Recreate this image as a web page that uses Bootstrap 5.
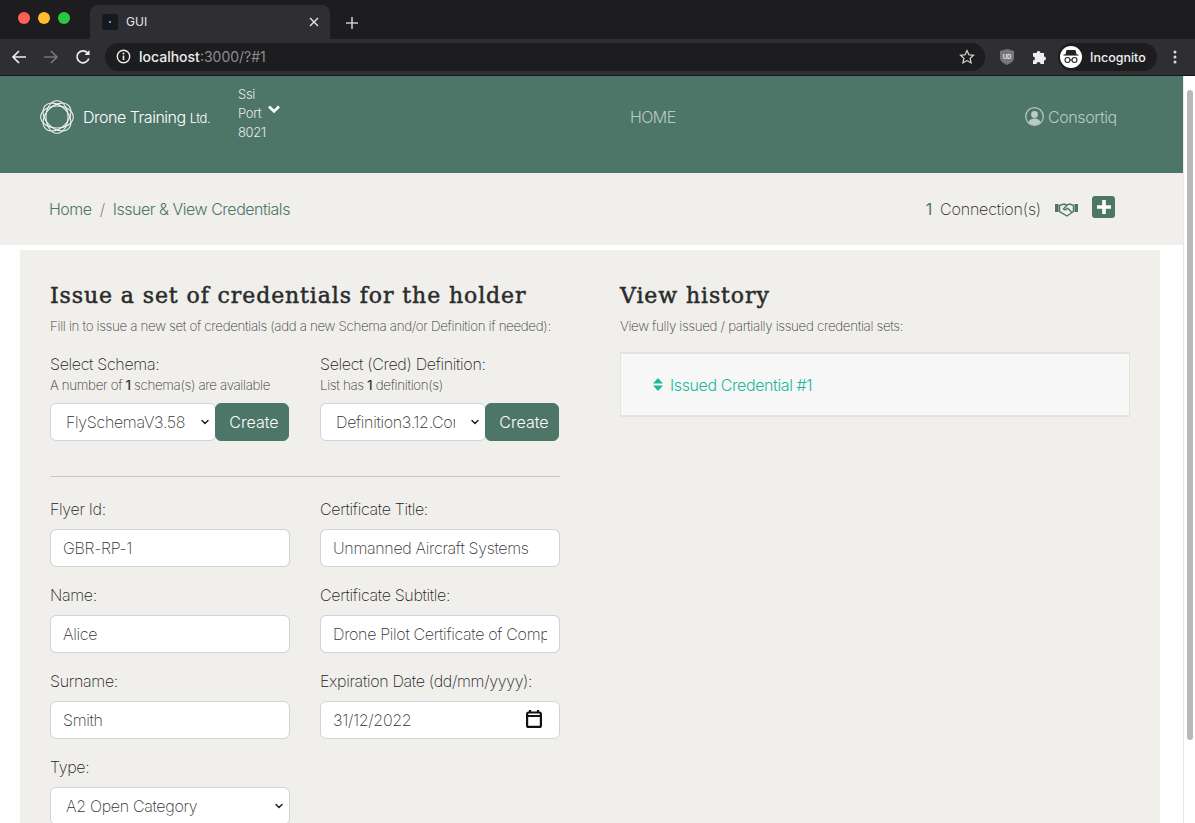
<!DOCTYPE html>
<html lang="en">
<head>
    <meta charset="UTF-8">
    <meta name="viewport" content="width=device-width, initial-scale=1.0">
    <title>GUI</title>
    <link href="https://cdn.jsdelivr.net/npm/bootstrap@5.3.0/dist/css/bootstrap.min.css" rel="stylesheet">
    <style>
        html, body { height: 100%; overflow: hidden; }
        body { font-family: Inter, "Liberation Sans", sans-serif; font-weight: 300; color: #212529; background: #fff; }

        /* browser frame */
        .tab-strip { height: 39px; background: #1d1d20; padding-left: 90px; }
        .lights { left: 18px; top: 12px; }
        .light { width: 12px; height: 12px; border-radius: 50%; }
        .browser-tab { width: 240px; height: 34px; margin-top: 5px; background: #2e2e33; border-radius: 8px 8px 0 0; padding: 0 11px 0 12px; color: #e8e8e8; font-size: 12px; font-weight: 400; }
        .tab-icon { width: 16px; height: 16px; background: #17191c; border-radius: 2px; }
        .tab-icon span { width: 2px; height: 2px; background: #39b6e8; }
        .toolbar { height: 37px; background: #2e2e33; border-bottom: 1px solid #18181a; padding: 0 13px 1px 11px; }
        .address { width: 880px; height: 28px; background: #1d1d20; border-radius: 14px; margin-left: 14px; padding: 0 10px 0 11px; color: #8c8c8f; font-size: 14px; font-weight: 400; }
        .address b { color: #eee; font-weight: 500; }
        .incognito { height: 28px; width: 99px; border-radius: 14px; background: #1d1d20; color: #eee; font-size: 12.5px; font-weight: 500; padding-left: 2px; margin-left: 10px; }
        .incognito span { padding-top: 3px; }
        .incog-face { width: 22px; height: 22px; background: #fff; border-radius: 50%; }

        /* page */
        .viewport { height: 747px; }
        .page-area { width: 1183px; letter-spacing: -.02em; font-weight: 200; }
        .scroll-track { width: 12px; background: #fff; border-left: 1px solid #e8e8e8; padding: 14px 2px 0 3px; }
        .scroll-thumb { height: 650px; background: #b9b9b9; border-radius: 4px; }

        .top-header { height: 97px; background: #4d7568; padding: 0 66px 16px 40px; color: #fff; }
        .brand-name { font-size: 16px; margin-left: 9px; width: 145px; font-weight: 300; letter-spacing: -.03em; }
        .brand-name small { font-size: 13px; }
        .port-info { font-size: 13px; line-height: 19px; margin: 0 0 6px 10px; color: #e4ebe8; width: 392px; font-weight: 300; letter-spacing: -.025em; }
        .home-link { font-size: 16px; color: #b9cbc5; text-decoration: none; width: 395px; font-weight: 300; letter-spacing: -.035em; }
        .user-link { font-size: 16px; color: #b9cbc5; font-weight: 300; letter-spacing: -.025em; }

        .crumb-band { height: 72px; background: #f0efeb; padding: 0 68px 0 49px; }
        .crumb-band .breadcrumb { --bs-breadcrumb-margin-bottom: 0; }
        .crumb-band a { color: #4d7568; text-decoration: none; font-weight: 300; letter-spacing: -.03em; }
        .conn-count { color: #4d7568; font-weight: 400; }
        .conn-text { letter-spacing: -.01em; }
        .plus-box { width: 23px; height: 22px; background: #4d7568; border-radius: 3px; margin-left: 14px; }
        .shake-icon { margin-left: 14px; }

        .work-card { width: 1140px; margin: 5px 0 0 20px; background: #f0efeb; }
        .work-col { padding: 31px 30px 0; }
        .slab-title { font-family: "DejaVu Serif", serif; font-size: 22px; font-weight: 400; line-height: 30px; color: #2b2b2b; margin-bottom: 6px; white-space: nowrap; letter-spacing: .9px; -webkit-text-stroke: .5px #2b2b2b; }
        .hint { font-size: 13.35px; line-height: 18px; color: #3a3a3a; letter-spacing: -.025em; margin-bottom: 17px; }
        .form-cols { --bs-gutter-x: 30px; }
        .field-label { color: #222; margin-bottom: 0; }
        .field-hint { font-size: 13.35px; line-height: 19px; color: #333; letter-spacing: -.025em; margin-bottom: 8px; }
        .field-hint b { font-weight: 500; }
        .work-card .form-label { color: #222; }
        .work-card .form-control, .work-card .form-select { font-weight: 200; color: #333; border-color: #ced4da; letter-spacing: -.02em; }
        .work-card .form-select { padding-left: 15px; background-size: 10px 8px; background-position: right 5px center; background-image: url("data:image/svg+xml,%3csvg xmlns='http://www.w3.org/2000/svg' viewBox='0 0 16 16'%3e%3cpath fill='none' stroke='%23222' stroke-linecap='round' stroke-linejoin='round' stroke-width='3' d='M2 5l6 6 6-6'/%3e%3c/svg%3e"); }
        .select-pair .form-select { width: 166px; flex: none; padding-right: 30px; }
        .btn-create { width: 74px; height: 38px; padding: 0 0 0 4px; background: #4d7568; border-color: #4d7568; color: #fff; font-weight: 300; margin-left: -1px; letter-spacing: 0; }
        .rule-line { margin: 35px 0 20px; border-color: #c9c9c5; opacity: 1; }
        .date-wrap svg { right: 18px; top: 9px; }
        .history-box { height: 65px; width: 510px; margin-top: 17px; background: #f7f7f7; border: solid #e2e2e0; border-width: 2px 1px; padding: 0 0 0 32px; }
        .history-box a { color: #1eb89a; text-decoration: none; font-weight: 300; gap: 7px; letter-spacing: -.025em; }
    </style>
</head>
<body>
<!-- Browser frame -->
<div class="tab-strip d-flex position-relative">
    <div class="lights position-absolute d-flex gap-2">
        <div class="light" style="background:#ff5f57"></div>
        <div class="light" style="background:#febc2e"></div>
        <div class="light" style="background:#28c840"></div>
    </div>
    <div class="browser-tab d-flex align-items-center">
        <div class="tab-icon d-flex align-items-center justify-content-center me-2"><span></span></div>
        <span class="flex-grow-1">GUI</span>
        <svg width="10" height="10" viewBox="0 0 10 10" stroke="#e8e8e8" stroke-width="1.4"><path d="M1 1l8 8M9 1l-8 8"/></svg>
    </div>
    <svg class="mt-3" style="margin-left:15px" width="14" height="14" viewBox="0 0 14 14" stroke="#c8c8c8" stroke-width="1.6"><path d="M7 1v12M1 7h12"/></svg>
</div>
<div class="toolbar d-flex align-items-center">
    <svg width="16" height="16" viewBox="0 0 16 16" fill="none" stroke="#eee" stroke-width="1.7"><path d="M15 8H2M8 2L2 8l6 6"/></svg>
    <svg class="ms-3" width="16" height="16" viewBox="0 0 16 16" fill="none" stroke="#77777a" stroke-width="1.7"><path d="M1 8h13M8 2l6 6-6 6"/></svg>
    <svg class="ms-3" width="16" height="16" viewBox="0 0 16 16" fill="none" stroke="#eee" stroke-width="1.7"><path d="M13.8 9.5A6 6 0 1 1 12.3 3.6L14 5.5"/><path d="M14.5 1v5h-5" fill="#eee" stroke="none"/></svg>
    <div class="address d-flex align-items-center">
        <svg width="15" height="15" viewBox="0 0 15 15" fill="none" class="me-2"><circle cx="7.5" cy="7.5" r="6.2" stroke="#eee" stroke-width="1.4"/><path d="M7.5 6.5v4.5" stroke="#eee" stroke-width="1.6"/><circle cx="7.5" cy="4.4" r="1" fill="#eee"/></svg>
        <span class="flex-grow-1"><b>localhost</b>:3000/?#1</span>
        <svg width="16" height="16" viewBox="0 0 16 16" fill="none" stroke="#ddd" stroke-width="1.2"><path d="M8 1.6l1.9 4.2 4.6.5-3.4 3.1 1 4.5L8 11.6l-4.1 2.3 1-4.5L1.5 6.3l4.6-.5z"/></svg>
    </div>
    <svg style="margin-left:15px" width="14" height="16" viewBox="0 0 14 16"><path d="M7 0l7 2v6.5c0 3.5-3 5.8-7 7.5-4-1.7-7-4-7-7.5V2z" fill="#77777b"/><text x="7" y="9.5" font-size="6" font-family="Inter" font-weight="600" fill="#eee" text-anchor="middle">UD</text></svg>
    <svg style="margin-left:18px" width="16" height="16" viewBox="0 0 16 16" fill="#eee"><path d="M1 4h3.5a2 2 0 1 1 4 0H12v3.500a2 2 0 1 1 0 4V15H8.500a2 2 0 1 0-4 0H1v-3.500a2 2 0 1 0 0-4z"/></svg>
    <div class="incognito d-flex align-items-center gap-2">
        <div class="incog-face d-flex align-items-center justify-content-center">
            <svg width="16" height="14" viewBox="0 0 16 14" fill="none" stroke="#222" stroke-width="1.1"><path d="M4 .5h8l1 4H3z" fill="#222"/><path d="M.5 5h15"/><circle cx="4.5" cy="10" r="2.5"/><circle cx="11.5" cy="10" r="2.5"/><path d="M7 10h2"/></svg>
        </div>
        <span>Incognito</span>
    </div>
    <svg class="ms-3" width="4" height="14" viewBox="0 0 4 14" fill="#ddd"><circle cx="2" cy="2" r="1.5"/><circle cx="2" cy="7" r="1.5"/><circle cx="2" cy="12" r="1.5"/></svg>
</div>

<div class="viewport d-flex overflow-hidden">
    <div class="page-area">
        <!-- Header -->
        <nav class="top-header d-flex align-items-center">
            <svg width="34" height="34" viewBox="0 0 34 34" fill="none" stroke="#eef2f0" stroke-width="1.1">
                <ellipse cx="17" cy="17" rx="16.3" ry="11"/>
                <ellipse cx="17" cy="17" rx="16.3" ry="11" transform="rotate(45 17 17)"/>
                <ellipse cx="17" cy="17" rx="16.3" ry="11" transform="rotate(90 17 17)"/>
                <ellipse cx="17" cy="17" rx="16.3" ry="11" transform="rotate(135 17 17)"/>
            </svg>
            <span class="brand-name">Drone Training <small>Ltd.</small></span>
            <div class="port-info d-flex align-items-center">
                <div>Ssi<br>Port<br>8021</div>
                <svg class="mb-2" style="margin-left:2px" width="12" height="9" viewBox="0 0 12 9" fill="none" stroke="#fff" stroke-width="2.6"><path d="M1 1.5l5 5 5-5"/></svg>
            </div>
            <a class="home-link" href="#">HOME</a>
            <span class="user-link d-flex align-items-center gap-1">
                <svg width="19" height="19" viewBox="0 0 19 19" fill="none"><circle cx="9.5" cy="9.5" r="8.8" stroke="#b9cbc5" stroke-width="1.2"/><circle cx="9.5" cy="7.5" r="3.4" fill="#b9cbc5"/><path d="M3.5 15.5c.8-3 3-4 6-4s5.200 1 6 4a8.500 8.500 0 0 1-12 0z" fill="#b9cbc5"/></svg>
                Consortiq
            </span>
        </nav>

        <!-- Breadcrumb -->
        <div class="crumb-band d-flex align-items-center justify-content-between">
            <ol class="breadcrumb">
                <li class="breadcrumb-item"><a href="#">Home</a></li>
                <li class="breadcrumb-item"><a href="#">Issuer &amp; View Credentials</a></li>
            </ol>
            <div class="d-flex align-items-center">
                <span class="conn-count me-2">1</span>
                <span class="conn-text">Connection(s)</span>
                <svg class="shake-icon" width="23" height="15" viewBox="0 0 23 15" fill="none" stroke="#4d7568" stroke-width="1.4"><path d="M0 2h3.5v8H0zM23 2h-3.5v8H23z" fill="#4d7568" stroke="none"/><path d="M4.5 3.5L9 2l3 1 3-1 3.5 1.5v6L12 14 4.5 9.5zM12 3L8.500 7c1.500 1.200 3 .5 4-.7l4 3.700"/></svg>
                <div class="plus-box d-flex align-items-center justify-content-center mb-1">
                    <svg width="14" height="14" viewBox="0 0 14 14" stroke="#fff" stroke-width="3.6"><path d="M7 0v14M0 7h14"/></svg>
                </div>
            </div>
        </div>

        <!-- Content -->
        <div class="work-card">
            <div class="row g-0">
                <div class="col-6 work-col">
                    <h2 class="slab-title">Issue a set of credentials for the holder</h2>
                    <p class="hint">Fill in to issue a new set of credentials (add a new Schema and/or Definition if needed):</p>
                    <div class="row form-cols">
                        <div class="col-6">
                            <p class="field-label">Select Schema:</p>
                            <p class="field-hint">A number of <b>1</b> schema(s) are available</p>
                            <div class="select-pair d-flex">
                                <select class="form-select"><option>FlySchemaV3.58</option></select>
                                <button class="btn btn-create" type="button">Create</button>
                            </div>
                        </div>
                        <div class="col-6">
                            <p class="field-label">Select (Cred) Definition:</p>
                            <p class="field-hint">List has <b>1</b> definition(s)</p>
                            <div class="select-pair d-flex">
                                <select class="form-select"><option>Definition3.12.Commercial</option></select>
                                <button class="btn btn-create" type="button">Create</button>
                            </div>
                        </div>
                    </div>
                    <hr class="rule-line">
                    <div class="row form-cols">
                        <div class="col-6 mb-3">
                            <label class="form-label">Flyer Id:</label>
                            <input class="form-control" type="text" value="GBR-RP-1">
                        </div>
                        <div class="col-6 mb-3">
                            <label class="form-label">Certificate Title:</label>
                            <input class="form-control" type="text" value="Unmanned Aircraft Systems">
                        </div>
                        <div class="col-6 mb-3">
                            <label class="form-label">Name:</label>
                            <input class="form-control" type="text" value="Alice">
                        </div>
                        <div class="col-6 mb-3">
                            <label class="form-label">Certificate Subtitle:</label>
                            <input class="form-control" type="text" value="Drone Pilot Certificate of Competency">
                        </div>
                        <div class="col-6 mb-3">
                            <label class="form-label">Surname:</label>
                            <input class="form-control" type="text" value="Smith">
                        </div>
                        <div class="col-6 mb-3">
                            <label class="form-label">Expiration Date (dd/mm/yyyy):</label>
                            <div class="date-wrap position-relative">
                                <input class="form-control" type="text" value="31/12/2022">
                                <svg class="position-absolute" width="16" height="18" viewBox="0 0 16 18" fill="none" stroke="#111" stroke-width="2.2"><rect x="1.1" y="2.5" width="13.8" height="14.4" rx="1.5"/><path d="M1 6h14M4 0v2.5M12 0v2.5"/></svg>
                            </div>
                        </div>
                        <div class="col-6 mb-3">
                            <label class="form-label">Type:</label>
                            <select class="form-select"><option>A2 Open Category</option></select>
                        </div>
                    </div>
                </div>
                <div class="col-6 work-col">
                    <h2 class="slab-title">View history</h2>
                    <p class="hint mb-0">View fully issued / partially issued credential sets:</p>
                    <div class="history-box d-flex align-items-center">
                        <a href="#" class="d-flex align-items-center">
                            <svg width="10" height="13" viewBox="0 0 10 13" fill="#1eb89a"><path d="M5 0l5 5.5H0zM5 13l5-5.5H0z"/></svg>
                            Issued Credential #1
                        </a>
                    </div>
                </div>
            </div>
        </div>
    </div>
    <div class="scroll-track flex-shrink-0"><div class="scroll-thumb"></div></div>
</div>
</body>
</html>
